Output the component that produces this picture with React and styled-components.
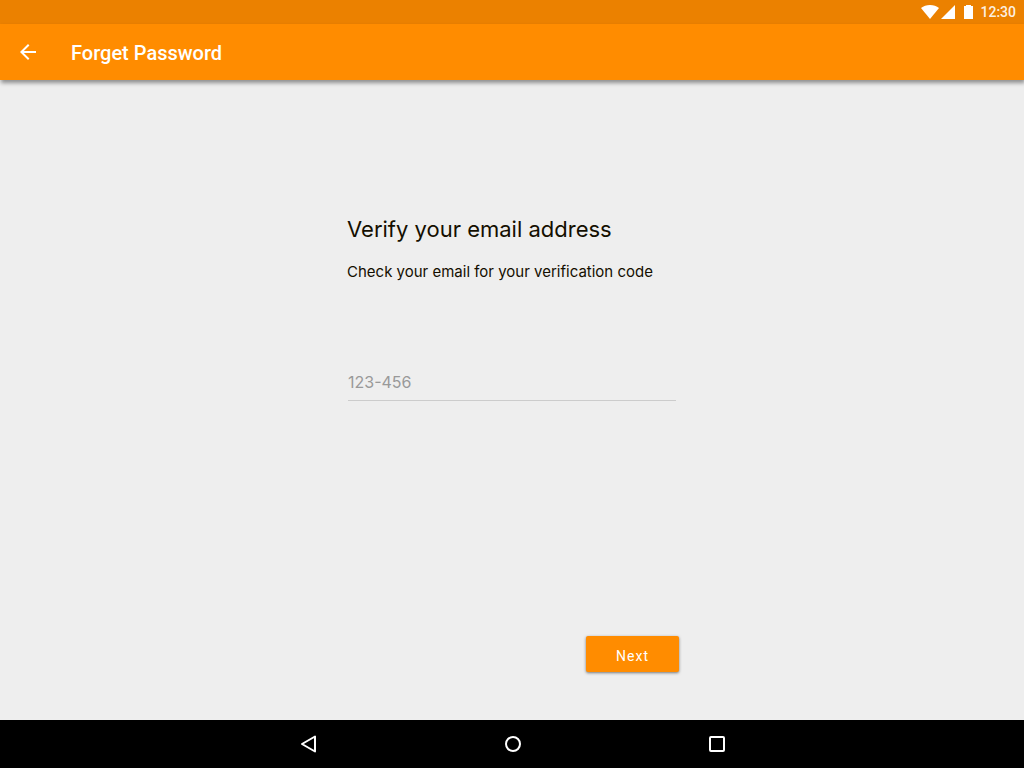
import React from "react";
import styled, { createGlobalStyle } from "styled-components";

const GlobalStyle = createGlobalStyle`
  *, *::before, *::after { box-sizing: border-box; }
  body { margin: 0; font-family: Roboto, "Liberation Sans", sans-serif; }
`;

const Screen = styled.div`
  min-height: 100vh;
  display: flex;
  flex-direction: column;
  background: #eeeeee;
`;

const StatusBar = styled.div`
  height: 24px;
  padding: 0 8px;
  display: flex;
  align-items: center;
  justify-content: flex-end;
  background: #eb8100;
  color: #ffffff;
`;

const StatusIcon = styled.svg`
  display: block;
  fill: #ffffff;
  margin-right: ${(p) => p.$gap}px;
`;

const Clock = styled.time`
  font-size: 14px;
  line-height: 24px;
  font-weight: 500;
  color: rgba(255, 255, 255, 0.9);
`;

const AppBar = styled.header`
  height: 56px;
  padding: 0 16px;
  display: flex;
  align-items: center;
  gap: 31px;
  background: #ff8c00;
  box-shadow: 1px 3px 4px rgba(0, 0, 0, 0.4);
`;

const IconButton = styled.button`
  width: 24px;
  height: 24px;
  padding: 0;
  border: 0;
  background: none;
  cursor: pointer;
`;

const Glyph = styled.svg`
  display: block;
`;

const Title = styled.h1`
  margin: 0;
  padding-top: 2px;
  font-size: 20px;
  line-height: 24px;
  font-weight: 500;
  color: #ffffff;
`;

const Main = styled.main`
  flex: 1;
  display: flex;
  justify-content: center;
  padding: 133px 16px 48px 18px;
`;

const Form = styled.form`
  width: 100%;
  max-width: 332px;
  display: flex;
  flex-direction: column;
`;

const Heading = styled.h2`
  margin: 0 0 14px;
  font-family: Inter, Roboto, sans-serif;
  font-size: 22px;
  line-height: 33px;
  font-weight: 400;
  color: #140f00;
`;

const CodeLabel = styled.label`
  font-family: Inter, Roboto, sans-serif;
  font-size: 15px;
  line-height: 24px;
  color: #140f00;
`;

const CodeInput = styled.input`
  height: 37px;
  margin: 80px 3px 0 1px;
  padding: 0;
  border: 0;
  border-bottom: 1px solid #cccccc;
  border-radius: 0;
  outline: 0;
  background: none;
  font-family: Inter, Roboto, sans-serif;
  font-size: 16px;
  color: #140f00;

  &::placeholder {
    color: #999999;
    opacity: 1;
  }
`;

const NextButton = styled.button`
  align-self: flex-end;
  width: 93px;
  height: 36px;
  margin-top: auto;
  padding: 4px 0 0;
  border: 0;
  border-radius: 2px;
  background: #ff8c00;
  box-shadow: 0 1px 3px rgba(0, 0, 0, 0.5);
  font-family: Roboto, sans-serif;
  font-size: 14px;
  letter-spacing: 1px;
  color: #ffffff;
  cursor: pointer;
`;

const NavBar = styled.nav`
  height: 48px;
  padding-left: 2px;
  display: flex;
  align-items: center;
  justify-content: center;
  gap: 180px;
  background: #000000;
`;

export default function App() {
  return (
    <Screen>
      <GlobalStyle />
      <StatusBar>
        <StatusIcon $gap={2} width="18" height="14" viewBox="0 0 18 14" aria-hidden="true">
          <path d="M9 14 18 3C15.500 1 12.500 0 9 0S2.500 1 0 3Z" />
        </StatusIcon>
        <StatusIcon $gap={9} width="14" height="14" viewBox="0 0 14 14" aria-hidden="true">
          <path d="M14 0V14H0Z" />
        </StatusIcon>
        <StatusIcon $gap={7} width="9" height="14" viewBox="0 0 9 14" aria-hidden="true">
          <path d="M2 0H7V1H9V14H0V1H2Z" />
        </StatusIcon>
        <Clock>12:30</Clock>
      </StatusBar>
      <AppBar>
        <IconButton type="button" aria-label="Back">
          <Glyph width="24" height="24" viewBox="0 0 24 24" fill="#ffffff">
            <path d="M20 11H7.830l5.590-5.590L12 4l-8 8 8 8 1.410-1.410L7.830 13H20z" />
          </Glyph>
        </IconButton>
        <Title>Forget Password</Title>
      </AppBar>
      <Main>
        <Form onSubmit={(e) => e.preventDefault()}>
          <Heading>Verify your email address</Heading>
          <CodeLabel htmlFor="code">Check your email for your verification code</CodeLabel>
          <CodeInput id="code" type="text" placeholder="123-456" />
          <NextButton type="submit">Next</NextButton>
        </Form>
      </Main>
      <NavBar aria-label="System">
        <IconButton type="button" aria-label="Back">
          <Glyph width="24" height="24" viewBox="0 0 24 24" fill="none" stroke="#ffffff" strokeWidth="2" strokeLinejoin="round">
            <path d="M18 4.500V19.500L5 12Z" />
          </Glyph>
        </IconButton>
        <IconButton type="button" aria-label="Home">
          <Glyph width="24" height="24" viewBox="0 0 24 24" fill="none" stroke="#ffffff" strokeWidth="2">
            <circle cx="12" cy="12" r="7" />
          </Glyph>
        </IconButton>
        <IconButton type="button" aria-label="Overview">
          <Glyph width="24" height="24" viewBox="0 0 24 24" fill="none" stroke="#ffffff" strokeWidth="2">
            <rect x="5" y="5" width="14" height="14" rx="1" />
          </Glyph>
        </IconButton>
      </NavBar>
    </Screen>
  );
}
